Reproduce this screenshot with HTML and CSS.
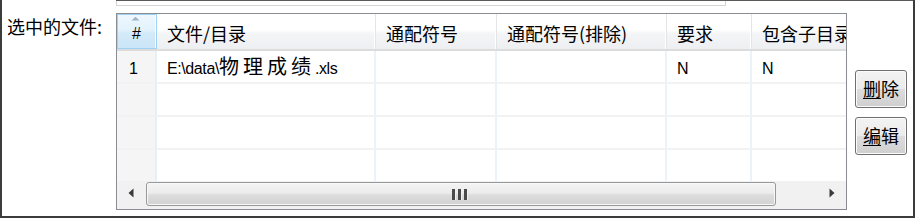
FILE: index.html
```html
<!DOCTYPE html>
<html lang="zh">
<head>
<meta charset="utf-8">
<link rel="stylesheet" href="styles.css">
</head>
<body>
<div class="frame">
  <div class="top"><div class="topbox"></div></div>
  <div class="main">
    <div class="label">选中的文件:</div>
    <div class="grid">
      <div class="head">
        <div class="hc hc-num">
          <svg class="sort" width="9" height="5" viewBox="0 0 9 5"><path d="M0.5 4.5 L4.5 0.8 L8.5 4.5 Z" fill="#9fb3c8"/></svg>
          <span class="lat">#</span>
        </div>
        <div class="hc">文件/目录</div>
        <div class="hc">通配符号</div>
        <div class="hc">通配符号(排除)</div>
        <div class="hc">要求</div>
        <div class="hc">包含子目录</div>
      </div>
      <div class="body">
        <div class="c c-num"><span class="lat">1</span></div>
        <div class="c"><span class="lat">E:\data\</span><span class="cjk">物理成绩</span><span class="lat">.xls</span></div>
        <div class="c"></div>
        <div class="c"></div>
        <div class="c"><span class="lat">N</span></div>
        <div class="c"><span class="lat">N</span></div>

        <div class="c c-num"></div><div class="c"></div><div class="c"></div><div class="c"></div><div class="c"></div><div class="c"></div>
        <div class="c c-num"></div><div class="c"></div><div class="c"></div><div class="c"></div><div class="c"></div><div class="c"></div>
        <div class="c c-num"></div><div class="c"></div><div class="c"></div><div class="c"></div><div class="c"></div><div class="c"></div>
      </div>
      <div class="hscroll">
        <div class="arrow">
          <svg width="6" height="10" viewBox="0 0 6 10"><path d="M5.5 0.5 L0.5 5 L5.5 9.5 Z" fill="#3a3a3a"/></svg>
        </div>
        <div class="thumb">
          <div class="grip"><i></i><i></i><i></i></div>
        </div>
        <div class="arrow arrow-r">
          <svg width="6" height="10" viewBox="0 0 6 10"><path d="M0.5 0.5 L5.5 5 L0.5 9.5 Z" fill="#3a3a3a"/></svg>
        </div>
      </div>
    </div>
    <div class="buttons">
      <div class="btn"><u>删</u>除</div>
      <div class="btn"><u>编</u>辑</div>
    </div>
  </div>
</div>
</body>
</html>
```

FILE: styles.css
```css
html, body {
  margin: 0;
  padding: 0;
  background: #ffffff;
}
body {
  width: 917px;
  height: 218px;
  overflow: hidden;
  font-family: "Noto Sans CJK SC", sans-serif;
  color: #000;
}
.frame {
  box-sizing: border-box;
  width: 915px;
  height: 218px;
  border: 2px solid #3c3c3c;
  border-top: none;
}
.top {
  margin-left: 114px;
  height: 6px;
  box-sizing: border-box;
  border-top: 1px solid #5a5a5a;
}
.topbox {
  box-sizing: border-box;
  width: 610px;
  height: 5px;
  border: 1px solid #d4d4d4;
  border-top: none;
}
.main {
  display: flex;
  height: 210px;
}
.label {
  box-sizing: border-box;
  width: 114px;
  padding-left: 5px;
  padding-top: 8px;
  font-size: 18px;
  line-height: 24px;
}
.grid {
  box-sizing: border-box;
  margin-top: 7px;
  width: 731px;
  height: 197px;
  border: 1px solid #8a8d92;
  overflow: hidden;
  display: flex;
  flex-direction: column;
}
.head {
  display: grid;
  grid-template-columns: 40px 219px 121px 170px 85px 150px;
  height: 37px;
  box-sizing: border-box;
  border-bottom: 2px solid #dcdcdc;
  flex: none;
}
.hc {
  position: relative;
  box-sizing: border-box;
  padding-left: 10px;
  padding-top: 7px;
  font-size: 18px;
  line-height: 24px;
  white-space: nowrap;
  overflow: hidden;
  border-right: 1px solid #e3e4e6;
  box-shadow: inset -1px 0 0 #ffffff;
  background: linear-gradient(#ffffff 0%, #ffffff 45%, #f4f5f7 55%, #eeeff2 100%);
}
.hc-num {
  padding-left: 14px;
  padding-top: 4px;
  border: 1px solid #9fd2f2;
  background: linear-gradient(#eef7fd 0%, #e3f2fc 45%, #d3eaf9 55%, #cbe6f8 100%);
}
.sort {
  position: absolute;
  left: 13px;
  top: 1px;
}
.lat {
  font-family: "Liberation Sans", sans-serif;
  font-size: 16px;
}
.c .lat {
  letter-spacing: -0.4px;
}
.cjk {
  font-size: 20px;
  letter-spacing: 4px;
}
.body {
  display: grid;
  grid-template-columns: 40px 219px 121px 170px 85px 150px;
  grid-auto-rows: 33px;
  height: 130px;
  overflow: hidden;
  flex: none;
}
.c {
  box-sizing: border-box;
  padding-left: 10px;
  line-height: 30px;
  font-size: 18px;
  white-space: nowrap;
  border-right: 2px solid #ebf2fa;
  border-bottom: 2px solid #f2f2f2;
}
.c-num {
  padding-left: 12px;
  background: #f5f5f5;
  border-right: 2px solid #e6eef8;
}
.hscroll {
  display: flex;
  height: 28px;
  background: #f1f1f1;
  flex: none;
}
.arrow {
  width: 29px;
  display: flex;
  align-items: center;
  justify-content: center;
  padding-bottom: 4px;
  box-sizing: border-box;
}
.arrow svg {
  margin-left: -2px;
}
.arrow-r {
  flex: 1;
  justify-content: flex-end;
}
.arrow-r svg {
  margin-left: 0;
  margin-right: 11px;
}
.thumb {
  box-sizing: border-box;
  width: 630px;
  height: 24px;
  margin-top: 1px;
  border: 1px solid #989898;
  border-radius: 3px;
  background: linear-gradient(#f4f4f4 0%, #ececec 45%, #dcdcdc 55%, #d2d2d2 100%);
  box-shadow: inset 0 0 0 1px #f8f8f8;
  display: flex;
  align-items: center;
  justify-content: center;
}
.grip {
  display: flex;
  gap: 2px;
  margin-left: -2px;
}
.grip i {
  display: block;
  width: 3px;
  height: 11px;
  background: #4a4a4a;
  border-right: 1px solid #f0f0f0;
}
.buttons {
  display: flex;
  flex-direction: column;
  gap: 9px;
  margin-left: 8px;
  padding-top: 64px;
}
.btn {
  box-sizing: border-box;
  width: 52px;
  height: 38px;
  border: 1px solid #707070;
  border-radius: 3px;
  background: linear-gradient(#f3f3f3 0%, #ebebeb 50%, #dddddd 50%, #cfcfcf 100%);
  box-shadow: inset 0 0 0 1px #fbfbfb;
  font-size: 18px;
  line-height: 34px;
  text-align: center;
}
.btn u {
  text-decoration: underline;
  text-underline-offset: 2px;
}
```
